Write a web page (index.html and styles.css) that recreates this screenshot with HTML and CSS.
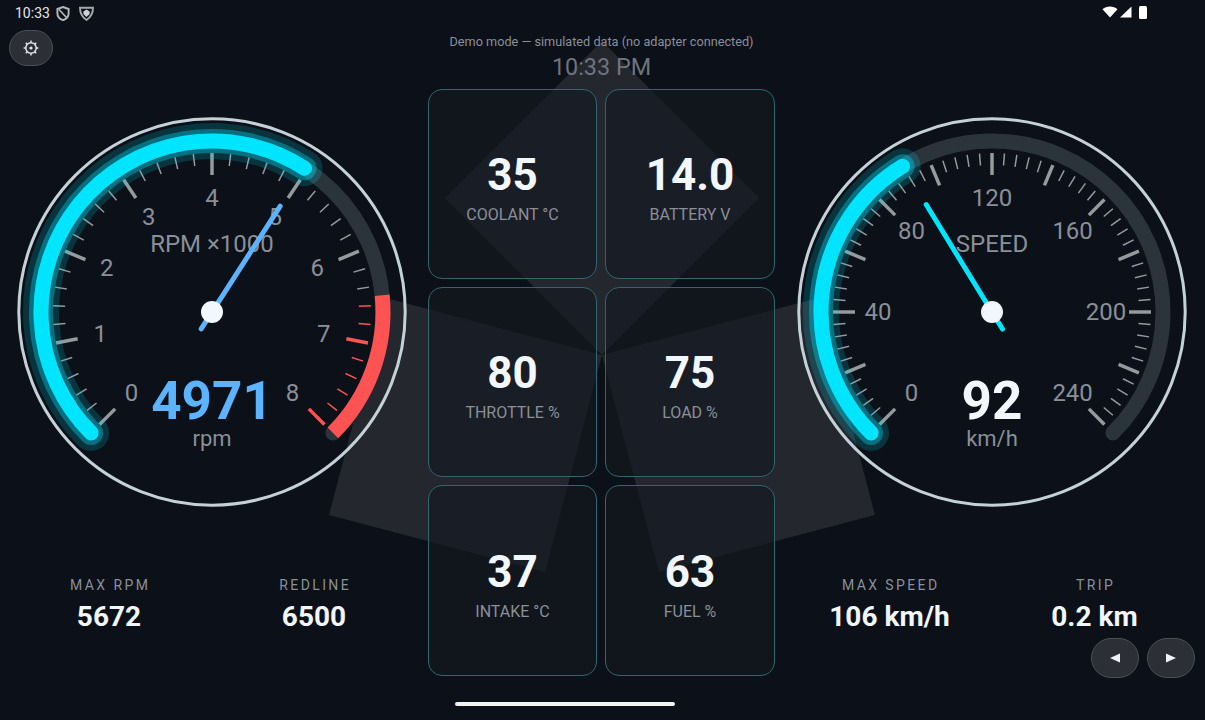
FILE: index.html
```html
<!DOCTYPE html>
<html>
<head>
<meta charset="UTF-8">
<title>Dashboard</title>
<link rel="stylesheet" href="styles.css">
<script src="gauges.js" defer></script>
</head>
<body>

<!-- background shape behind everything -->
<svg class="blades" viewBox="0 0 1205 720">
	<polygon points="602,355 759,198 602,41 445,198"/>
	<polygon points="602,355 386,298 329,515 545,572"/>
	<polygon points="602,355 818,298 875,515 659,572"/>
</svg>

<div class="statusbar">
	<div class="status-left">
		<span class="clock">10:33</span>
		<svg class="sicon" width="14" height="15" viewBox="0 0 14 15">
			<path d="M7 1 L12.6 3 V7.5 C12.6 10.5 10.2 13 7 14.2 C3.8 13 1.4 10.5 1.4 7.5 V3 Z" fill="none" stroke="#b4b8bc" stroke-width="1.9"/>
			<path d="M3 3.5 L10.5 11.5" stroke="#b4b8bc" stroke-width="1.7"/>
		</svg>
		<svg class="sicon" width="15" height="15" viewBox="0 0 15 15">
			<path d="M1 1.8 H14 C14 7 11.5 11.5 7.5 14 C3.5 11.5 1 7 1 1.8 Z" fill="none" stroke="#a4a8ac" stroke-width="1.9"/>
			<path d="M7.5 3.6 L10.6 5.6 V8 L7.5 11 L4.4 8 V5.6 Z" fill="#d0d3d6"/>
		</svg>
	</div>
	<div class="status-right">
		<svg width="16" height="12" viewBox="0 0 16 12"><path d="M0.5 3.2 C4.5 -0.4 11.5 -0.4 15.5 3.2 L8 11.5 Z" fill="#fff"/></svg>
		<svg width="13" height="12" viewBox="0 0 13 12"><path d="M12.5 0.5 V11.5 H1 Z" fill="#fff"/></svg>
		<svg class="batt" width="8" height="13" viewBox="0 0 8 13"><rect width="8" height="13" rx="1.5" fill="#fff"/></svg>
	</div>
</div>

<button class="pill settings">
	<svg width="16" height="16" viewBox="0 0 16 16">
		<circle cx="8" cy="8" r="5.2" fill="none" stroke="#e4e7ec" stroke-width="1.5"/>
		<circle cx="8" cy="8" r="1.6" fill="#e4e7ec"/>
		<path d="M8 0.6V2.6M8 13.4V15.4M0.6 8H2.6M13.4 8H15.4M2.8 2.8L4.2 4.2M11.8 11.8L13.2 13.2M13.2 2.8L11.8 4.2M4.2 11.8L2.8 13.2" stroke="#e4e7ec" stroke-width="1.4"/>
	</svg>
</button>

<div class="main">
	<div class="side side-left">
		<svg class="gauge" id="rpmGauge" viewBox="0 0 390 390"></svg>
		<div class="stats">
			<div class="stat"><div class="stat-label">MAX RPM</div><div class="stat-value">5672</div></div>
			<div class="stat"><div class="stat-label">REDLINE</div><div class="stat-value">6500</div></div>
		</div>
	</div>

	<div class="center">
		<div class="demo">Demo mode — simulated data (no adapter connected)</div>
		<div class="time">10:33 PM</div>
		<div class="cards">
			<div class="card"><div class="card-value">35</div><div class="card-label">COOLANT °C</div></div>
			<div class="card"><div class="card-value">14.0</div><div class="card-label">BATTERY V</div></div>
			<div class="card"><div class="card-value">80</div><div class="card-label">THROTTLE %</div></div>
			<div class="card"><div class="card-value">75</div><div class="card-label">LOAD %</div></div>
			<div class="card"><div class="card-value">37</div><div class="card-label">INTAKE °C</div></div>
			<div class="card"><div class="card-value">63</div><div class="card-label">FUEL %</div></div>
		</div>
	</div>

	<div class="side side-right">
		<svg class="gauge" id="speedGauge" viewBox="0 0 390 390"></svg>
		<div class="stats">
			<div class="stat"><div class="stat-label">MAX SPEED</div><div class="stat-value">106 km/h</div></div>
			<div class="stat"><div class="stat-label">TRIP</div><div class="stat-value">0.2 km</div></div>
		</div>
	</div>
</div>

<div class="nav">
	<button class="pill arrow"><svg width="10" height="10" viewBox="0 0 10 10"><polygon points="0,5 10,0.5 10,9.5" fill="#eef1f6"/></svg></button>
	<button class="pill arrow"><svg width="10" height="10" viewBox="0 0 10 10"><polygon points="10,5 0,0.5 0,9.5" fill="#eef1f6"/></svg></button>
</div>

<div class="homebar"></div>

</body>
</html>
```

FILE: styles.css
```css
html, body {
	margin: 0;
	height: 720px;
	overflow: hidden;
}
body {
	position: relative;
	background-color: #0c1018;
	color: #f2f6fd;
	font-family: Roboto, "Liberation Sans", sans-serif;
}

.blades {
	position: absolute;
	left: 0;
	top: 0;
	width: 1205px;
	height: 720px;
}
.blades polygon {
	fill: #24272e;
}

/* status bar */
.statusbar {
	position: relative;
	height: 26px;
	display: flex;
	justify-content: space-between;
	align-items: center;
	padding: 0 58px 0 15px;
}
.status-left {
	display: flex;
	align-items: center;
	gap: 6px;
}
.status-left .sicon + .sicon {
	margin-left: 3px;
}
.clock {
	font-size: 14px;
	color: #e4e6e8;
}
.status-right {
	display: flex;
	align-items: center;
	gap: 1px;
	margin-bottom: 2px;
}
.batt {
	margin-left: 6px;
}

/* buttons */
.pill {
	padding: 0;
	display: flex;
	align-items: center;
	justify-content: center;
	background-color: #2c2f35;
	border: 1px solid #4c4f55;
}
.settings {
	position: absolute;
	left: 9px;
	top: 30px;
	width: 44px;
	height: 36px;
	border-radius: 18px;
}
.nav {
	position: absolute;
	right: 10px;
	top: 638px;
	display: flex;
	gap: 8px;
}
.arrow {
	width: 48px;
	height: 40px;
	border-radius: 20px;
}
.homebar {
	position: absolute;
	left: 455px;
	top: 702px;
	width: 220px;
	height: 4px;
	border-radius: 2px;
	background-color: #f2f2f2;
}

/* three columns */
.main {
	position: relative;
	display: grid;
	grid-template-columns: 428px 347px 1fr;
}
.side {
	display: flex;
	flex-direction: column;
	align-items: center;
	padding-top: 91px;
}
.side-left {
	padding-right: 5px;
}
.side-right {
	padding-left: 4px;
}
.gauge {
	width: 390px;
	height: 390px;
	overflow: visible;
}
.stats {
	width: 410px;
	margin-top: 68px;
	display: grid;
	grid-template-columns: 1fr 1fr;
}
.stat {
	text-align: center;
}
.stat-label {
	font-size: 14px;
	line-height: 20px;
	letter-spacing: 2.4px;
	text-indent: 2.4px;
	color: #8a8f98;
}
.stat-value {
	font-size: 28px;
	line-height: 36px;
	margin-top: 4px;
	font-weight: 700;
}

/* center */
.demo {
	margin-top: 8px;
	font-size: 12.7px;
	line-height: 16px;
	text-align: center;
	color: #8a8f98;
}
.time {
	font-size: 23.4px;
	line-height: 32px;
	margin-top: 1px;
	text-align: center;
	color: #6e747d;
}
.cards {
	margin-top: 6px;
	display: grid;
	grid-template-columns: 169px 170px;
	grid-template-rows: 190px 190px 191px;
	gap: 8px;
}
.card {
	display: flex;
	flex-direction: column;
	align-items: center;
	justify-content: center;
	padding-top: 6px;
	box-sizing: border-box;
	background-color: rgba(21, 25, 33, 0.67);
	border: 1px solid #2f6670;
	border-radius: 14px;
}
.card-value {
	font-size: 44px;
	line-height: 52px;
	font-weight: 700;
}
.card-label {
	font-size: 16px;
	line-height: 20px;
	margin-top: 4px;
	color: #8a8f98;
}

/* gauge parts */
.ring {
	fill: none;
	stroke: #c4d1d8;
	stroke-width: 3;
}
.track, .arc, .halo1, .halo2, .red {
	fill: none;
	stroke-width: 15;
	stroke-linecap: round;
}
.track { stroke: #2c343b; }
.arc { stroke: #00e5ff; stroke-width: 15; }
.halo1 { stroke: rgba(0, 229, 255, 0.17); stroke-width: 36; }
.halo2 { stroke: rgba(0, 229, 255, 0.34); stroke-width: 24; }
.red { stroke: #ff5252; stroke-linecap: butt; }
.tick { stroke: #96999e; stroke-width: 1.5; }
.tick.major { stroke-width: 3.5; }
.tick.hot { stroke: #ff5252; }
.num {
	font-size: 24px;
	fill: #8a8f98;
	text-anchor: middle;
	dominant-baseline: central;
}
.title {
	font-size: 24px;
	fill: #8a8f98;
	text-anchor: middle;
	dominant-baseline: central;
}
.big {
	font-size: 53px;
	font-weight: 700;
	text-anchor: middle;
	dominant-baseline: central;
	fill: #f2f6fd;
}
.big.blue { fill: #5cb3ff; }
.unit {
	font-size: 22px;
	fill: #8a8f98;
	text-anchor: middle;
	dominant-baseline: central;
}
.needle {
	stroke-width: 5;
	stroke-linecap: round;
}
.hub { fill: #f2f6fd; }
```

FILE: gauges.js
```js
var CX = 195, CY = 195;

function pt(r, deg) {
	var a = deg * Math.PI / 180;
	return [CX + r * Math.sin(a), CY - r * Math.cos(a)];
}

function arcPath(r, a0, a1) {
	var p0 = pt(r, a0), p1 = pt(r, a1);
	var large = (a1 - a0) > 180 ? 1 : 0;
	return "M" + p0[0] + " " + p0[1] + " A" + r + " " + r + " 0 " + large + " 1 " + p1[0] + " " + p1[1];
}

function drawGauge(svg, o) {
	var html = "";
	html += "<circle class='ring' cx='195' cy='195' r='193.2'/>";
	html += "<path class='track' d='" + arcPath(171, -135, 135) + "'/>";

	// ticks: every major has 4 minors between
	var total = o.majors * 5;
	for (var i = 0; i <= total; i++) {
		var frac = i / total;
		var ang = -135 + 270 * frac;
		var major = i % 5 == 0;
		var p0 = pt(major ? 137 : 147, ang), p1 = pt(159, ang);
		var cls = "tick" + (major ? " major" : "");
		if (o.redFrom != null && frac >= o.redFrom) cls += " hot";
		html += "<line class='" + cls + "' x1='" + p0[0] + "' y1='" + p0[1] + "' x2='" + p1[0] + "' y2='" + p1[1] + "'/>";
	}

	var end = -135 + 270 * o.frac;
	var d = arcPath(171, -135, end);
	html += "<path class='halo1' d='" + d + "'/><path class='halo2' d='" + d + "'/><path class='arc' d='" + d + "'/>";
	if (o.redFrom != null) {
		html += "<path class='red' d='" + arcPath(171, -135 + 270 * o.redFrom, 135) + "'/>";
	}

	for (var j = 0; j < o.labels.length; j++) {
		var p = pt(114, -135 + 270 * j / (o.labels.length - 1));
		html += "<text class='num' x='" + p[0] + "' y='" + p[1] + "'>" + o.labels[j] + "</text>";
	}

	html += "<text class='title' x='195' y='126.5'>" + o.title + "</text>";
	html += "<text class='big " + o.bigClass + "' x='195' y='283.5'>" + o.value + "</text>";
	html += "<text class='unit' x='195' y='321'>" + o.unit + "</text>";

	var tip = pt(126, end), tail = pt(-20, end);
	html += "<line class='needle' stroke='" + o.needle + "' x1='" + tail[0] + "' y1='" + tail[1] + "' x2='" + tip[0] + "' y2='" + tip[1] + "'/>";
	html += "<circle class='hub' cx='195' cy='195' r='11'/>";
	svg.innerHTML = html;
}

drawGauge(document.getElementById("rpmGauge"), {
	majors: 8, frac: 4971 / 8000, redFrom: 6500 / 8000,
	labels: ["0", "1", "2", "3", "4", "5", "6", "7", "8"],
	title: "RPM ×1000", value: "4971", unit: "rpm", bigClass: "blue", needle: "#5cb3ff"
});
drawGauge(document.getElementById("speedGauge"), {
	majors: 12, frac: 92 / 240, redFrom: null,
	labels: ["0", "40", "80", "120", "160", "200", "240"],
	title: "SPEED", value: "92", unit: "km/h", bigClass: "", needle: "#00e5ff"
});
```
